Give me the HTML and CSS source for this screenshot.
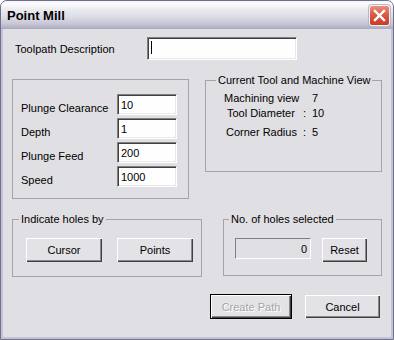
FILE: index.html
```html
<!DOCTYPE html>
<html lang="en">
<head>
    <meta charset="UTF-8">
    <meta name="viewport" content="width=device-width, initial-scale=1.0">
    <title>Point Mill</title>
    <link rel="stylesheet" href="styles.css">
</head>
<body>
    <div class="window">
        <div class="titlebar">
            <span class="title">Point Mill</span>
            <span class="close-btn">
                <svg width="19" height="19" viewBox="0 0 19 19">
                    <path d="M5 5 L14 14 M14 5 L5 14" stroke="#fff" stroke-width="2.4" stroke-linecap="square"/>
                </svg>
            </span>
        </div>

        <div class="client">
            <div class="desc-row">
                <span class="desc-label">Toolpath Description</span>
                <div class="field desc-field"><span class="caret"></span></div>
            </div>

            <div class="top-groups">
                <fieldset class="group params">
                    <div class="param-row">
                        <span class="param-label">Plunge Clearance</span>
                        <div class="field num-field">10</div>
                    </div>
                    <div class="param-row">
                        <span class="param-label">Depth</span>
                        <div class="field num-field">1</div>
                    </div>
                    <div class="param-row">
                        <span class="param-label">Plunge Feed</span>
                        <div class="field num-field">200</div>
                    </div>
                    <div class="param-row">
                        <span class="param-label">Speed</span>
                        <div class="field num-field">1000</div>
                    </div>
                </fieldset>

                <fieldset class="group tool-view">
                    <legend>Current Tool and Machine View</legend>
                    <div class="info-grid">
                        <span class="info-label">Machining view</span><span></span><span>7</span>
                        <span class="info-label indent-3">Tool Diameter</span><span>:</span><span>10</span>
                        <span class="info-label indent-2 row-gap">Corner Radius</span><span class="row-gap">:</span><span class="row-gap">5</span>
                    </div>
                </fieldset>
            </div>

            <div class="bottom-groups">
                <fieldset class="group holes-by">
                    <legend>Indicate holes by</legend>
                    <div class="holes-buttons">
                        <button class="btn pick-btn">Cursor</button>
                        <button class="btn pick-btn">Points</button>
                    </div>
                </fieldset>

                <fieldset class="group holes-count">
                    <legend>No. of holes selected</legend>
                    <div class="count-row">
                        <div class="count-field">0</div>
                        <button class="btn reset-btn">Reset</button>
                    </div>
                </fieldset>
            </div>

            <div class="actions">
                <button class="btn default-btn create-btn" disabled>Create Path</button>
                <button class="btn cancel-btn">Cancel</button>
            </div>
        </div>
    </div>
</body>
</html>
```

FILE: styles.css
```css
body {
    margin: 0;
    background-color: #ffffff;
    font-family: 'Liberation Sans', Arial, sans-serif;
    font-size: 11px;
    color: #000;
}

.window {
    width: 394px;
    height: 340px;
    box-sizing: border-box;
    border: 1px solid #6f6f8f;
    border-radius: 7px 7px 0 0;
    background-color: #c2c2d4;
    padding: 0 2px 2px;
    overflow: hidden;
}

.titlebar {
    height: 28px;
    margin: 0 -2px;
    padding: 0 3px 0 6px;
    display: flex;
    align-items: center;
    justify-content: space-between;
    background: linear-gradient(to bottom, #f4f4f8 0, #fdfdfe 3px, #e9e9ef 9px, #dcdce5 16px, #c6c6d5 23px, #a9a9be 28px);
    border-bottom: 0;
}

.title {
    font-size: 13px;
    font-weight: bold;
    color: #000;
    padding-top: 1px;
}

.close-btn {
    width: 19px;
    height: 19px;
    border: 1px solid #f4f2f2;
    border-radius: 3px;
    background: linear-gradient(to bottom, #ea8f7c 0, #dc5a44 45%, #c73c26 100%);
    display: flex;
    box-shadow: 0 0 0 1px #b8b8c8;
}

.client {
    height: 308px;
    background-color: #e0dfe3;
    box-sizing: border-box;
    padding-top: 8px;
}

/* description */

.desc-row {
    display: flex;
    align-items: center;
    padding-left: 12px;
}

.desc-label {
    width: 132px;
}

.field {
    box-sizing: border-box;
    background-color: #fefefe;
    border: 1px solid;
    border-color: #808080 #ffffff #ffffff #808080;
    box-shadow: inset 1px 1px #404040, inset -1px -1px #e8e8e8;
}

.desc-field {
    width: 150px;
    height: 23px;
    padding: 3px 0 0 3px;
}

.caret {
    display: block;
    width: 1px;
    height: 13px;
    background-color: #000;
}

/* group boxes */

.group {
    margin: 0;
    padding: 0;
    min-width: 0;
    box-sizing: border-box;
    border: 1px solid #a4a4a8;
}

.group legend {
    padding: 0 2px;
    line-height: 14px;
}

.top-groups {
    display: flex;
    align-items: flex-start;
    margin-top: 13px;
}

.params {
    margin-left: 9px;
    margin-top: 6px;
    width: 177px;
    height: 120px;
    padding: 14px 0 0 8px;
    display: flex;
    flex-direction: column;
    gap: 3px;
}

.param-row {
    display: flex;
    height: 21px;
}

.param-label {
    width: 96px;
    line-height: 13px;
    padding-top: 8px;
}

.num-field {
    width: 60px;
    height: 21px;
    padding: 3px 0 0 3px;
    line-height: 14px;
}

.tool-view {
    margin-left: 16px;
    width: 177px;
    height: 99px;
    padding: 0 0 0 10px;
}

.info-grid {
    display: grid;
    grid-template-columns: 79px 9px auto;
    line-height: 15px;
    margin: 4px 0 0 8px;
}

.indent-3 {
    padding-left: 3px;
}

.indent-2 {
    padding-left: 2px;
}

.row-gap {
    margin-top: 4px;
}

.bottom-groups {
    display: flex;
    align-items: flex-start;
    margin-top: 13px;
}

.holes-by {
    margin-left: 9px;
    width: 190px;
    height: 65px;
    padding: 0 0 0 6px;
}

.holes-buttons {
    display: flex;
    gap: 15px;
    margin: 12px 0 0 7px;
}

.holes-count {
    margin-left: 21px;
    width: 159px;
    height: 64px;
    padding: 0 0 0 5px;
}

.count-row {
    display: flex;
    align-items: flex-start;
    gap: 11px;
    margin: 12px 0 0 6px;
}

.count-field {
    box-sizing: border-box;
    width: 76px;
    height: 21px;
    border: 1px solid;
    border-color: #808080 #ffffff #ffffff #808080;
    text-align: right;
    padding: 3px 3px 0 0;
    line-height: 14px;
}

/* buttons */

.btn {
    box-sizing: border-box;
    font-family: inherit;
    font-size: 11px;
    color: #000;
    background-color: #e3e2e6;
    border: none;
    border-radius: 0;
    padding: 0;
    margin: 0;
    box-shadow: inset 1px 1px #ffffff, inset -1px -1px #404040, inset -2px -2px #8a8a8e;
}

.pick-btn {
    width: 76px;
    height: 24px;
}

.reset-btn {
    width: 45px;
    height: 24px;
}

.actions {
    display: flex;
    justify-content: flex-end;
    align-items: center;
    gap: 13px;
    margin-top: 17px;
    padding-right: 11px;
}

.default-btn {
    border: 1px solid #000;
}

.create-btn {
    width: 82px;
    height: 25px;
}

.create-btn:disabled {
    color: #a4a4a8;
    text-shadow: 1px 1px #ffffff;
}

.cancel-btn {
    width: 75px;
    height: 23px;
}
```
